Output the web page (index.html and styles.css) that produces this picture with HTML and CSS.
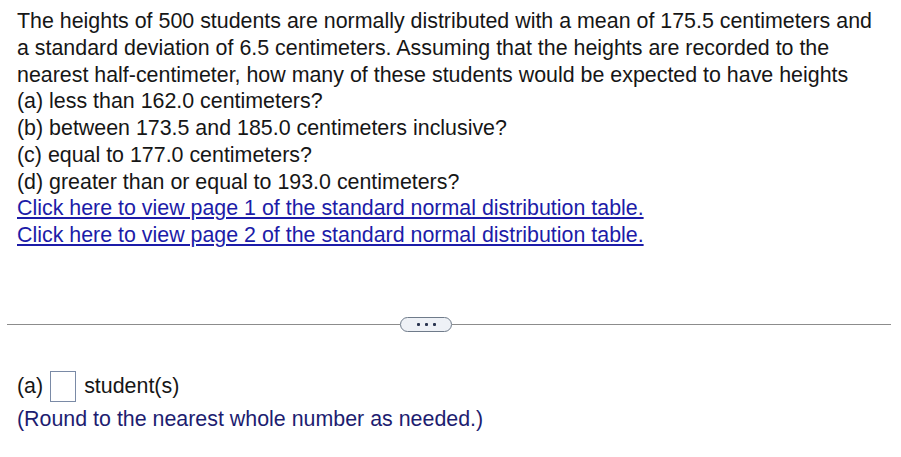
FILE: index.html
```html
<!DOCTYPE html>
<html>
<head>
<meta charset="utf-8">
<link rel="stylesheet" href="styles.css">
</head>
<body>
<div class="page">
  <div class="question">
    <p class="line">The heights of 500 students are normally distributed with a mean of 175.5 centimeters and a standard deviation of 6.5 centimeters. Assuming that the heights are recorded to the nearest half-centimeter, how many of these students would be expected to have heights</p>
    <p class="line">(a) less than 162.0 centimeters?</p>
    <p class="line">(b) between 173.5 and 185.0 centimeters inclusive?</p>
    <p class="line">(c) equal to 177.0 centimeters?</p>
    <p class="line">(d) greater than or equal to 193.0 centimeters?</p>
    <p class="line"><a class="link" href="#">Click here to view page 1 of the standard normal distribution table.</a></p>
    <p class="line"><a class="link" href="#">Click here to view page 2 of the standard normal distribution table.</a></p>
  </div>
  <div class="divider">
    <span class="rule rule-left"></span>
    <span class="pill"><span class="dot"></span><span class="dot"></span><span class="dot"></span></span>
    <span class="rule"></span>
  </div>
  <div class="answer">
    <div class="answer-row">
      <span>(a)</span>
      <span class="box"></span>
      <span>student(s)</span>
    </div>
    <p class="hint">(Round to the nearest whole number as needed.)</p>
  </div>
</div>
</body>
</html>
```

FILE: styles.css
```css
html, body {
  margin: 0;
  padding: 0;
  background: #ffffff;
}
body {
  font-family: "Liberation Sans", Arial, sans-serif;
  font-size: 21.4px;
  color: #161616;
}
.page {
  padding: 8px 0 0 7px;
  width: 884px;
}
.question {
  padding-left: 10px;
  width: 864px;
}
.line {
  margin: 0;
  line-height: 26.75px;
}
.link {
  color: #1c1ca8;
  text-decoration: underline;
  text-underline-offset: 2px;
}
.divider {
  display: flex;
  align-items: center;
  margin-top: 68px;
  height: 16px;
}
.rule {
  flex: 1;
  height: 1px;
  background: #8c8c8c;
}
.rule-left {
  flex: 0 0 393px;
}
.pill {
  box-sizing: border-box;
  width: 52px;
  height: 15px;
  border: 1px solid #6f7b8a;
  border-radius: 8px;
  background: #eef1f6;
  display: flex;
  align-items: center;
  justify-content: center;
  gap: 5px;
}
.dot {
  width: 3px;
  height: 3px;
  background: #2a3550;
  border-radius: 1px;
}
.answer {
  padding-left: 10px;
  margin-top: 38px;
}
.answer-row {
  display: flex;
  align-items: center;
  height: 32px;
}
.box {
  box-sizing: border-box;
  width: 26px;
  height: 31px;
  border: 1px solid #7a8aa6;
  background: #fff;
  margin: 0 8px 0 7px;
}
.hint {
  margin: 0;
  color: #1d1d70;
  line-height: 32px;
}
```
